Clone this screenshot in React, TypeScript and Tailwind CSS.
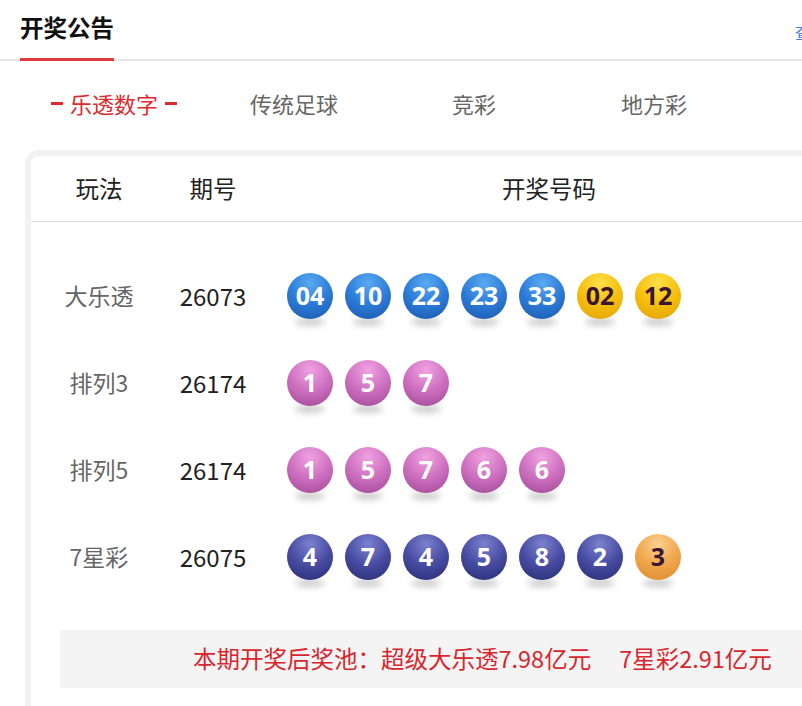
import React from 'react'

type Ball = { n: string; kind: 'blue' | 'yellow' | 'pink' | 'navy' | 'orange' }

const ballStyles: Record<Ball['kind'], string> = {
  blue: 'bg-[radial-gradient(circle_at_50%_22%,#5aaaf2_0%,#2c7bd8_50%,#1b58ab_100%)] text-white',
  yellow: 'bg-[radial-gradient(circle_at_50%_22%,#ffe04a_0%,#f5bf0c_50%,#e0a006_100%)] text-[#3a1630]',
  pink: 'bg-[radial-gradient(circle_at_50%_22%,#f0a2e2_0%,#cd6fbf_50%,#9d4793_100%)] text-white',
  navy: 'bg-[radial-gradient(circle_at_50%_22%,#7b80cf_0%,#474ca2_50%,#262a6f_100%)] text-white',
  orange: 'bg-[radial-gradient(circle_at_50%_22%,#fbd08e_0%,#f0a64c_50%,#db8a2a_100%)] text-[#3a1630]',
}

const rows: { name: string; issue: string; balls: Ball[] }[] = [
  {
    name: '大乐透',
    issue: '26073',
    balls: [
      { n: '04', kind: 'blue' },
      { n: '10', kind: 'blue' },
      { n: '22', kind: 'blue' },
      { n: '23', kind: 'blue' },
      { n: '33', kind: 'blue' },
      { n: '02', kind: 'yellow' },
      { n: '12', kind: 'yellow' },
    ],
  },
  {
    name: '排列3',
    issue: '26174',
    balls: ['1', '5', '7'].map((n) => ({ n, kind: 'pink' as const })),
  },
  {
    name: '排列5',
    issue: '26174',
    balls: ['1', '5', '7', '6', '6'].map((n) => ({ n, kind: 'pink' as const })),
  },
  {
    name: '7星彩',
    issue: '26075',
    balls: [
      ...['4', '7', '4', '5', '8', '2'].map((n) => ({ n, kind: 'navy' as const })),
      { n: '3', kind: 'orange' as const },
    ],
  },
]

const tabs = ['乐透数字', '传统足球', '竞彩', '地方彩']

function LottoBall({ ball }: { ball: Ball }) {
  return (
    <div className="relative w-[46px] h-[46px]">
      {/* soft floor shadow */}
      <div className="absolute left-[8px] right-[8px] -bottom-[7px] h-[8px] rounded-[50%] bg-black/20 blur-[3px]" />
      <div
        className={`relative w-[46px] h-[46px] rounded-full flex items-center justify-center text-[25px] font-bold leading-none ${ballStyles[ball.kind]}`}
        style={{ fontFamily: '"Open Sans", "Liberation Sans", sans-serif' }}
      >
        {ball.n}
      </div>
    </div>
  )
}

export default function App() {
  return (
    <div
      className="w-[802px] h-[706px] overflow-hidden bg-white"
      style={{ fontFamily: '"Noto Sans CJK SC", "Noto Sans", sans-serif' }}
    >
      <div className="w-[960px]">
        {/* Title bar */}
        <div className="relative h-[61px] border-b-2 border-[#e6e6e6] pl-[20px] flex items-start">
          <div className="h-[61px] border-b-[3px] border-[#e0393e] -mb-[2px] pt-[11px]">
            <h1 className="text-[23.5px] font-bold text-[#111] leading-[32px]">开奖公告</h1>
          </div>
          <a className="absolute left-[795px] top-[20px] text-[16px] text-[#3b7fd4]">查看更多</a>
        </div>

        {/* Tabs */}
        <div className="h-[89px] pl-[24px] flex items-center">
          {tabs.map((t, i) => (
            <div key={t} className="w-[180px] flex items-center justify-center pb-[4px]">
              {i === 0 ? (
                <div className="flex items-center gap-[7px] text-[#dc2a2f]">
                  <span className="w-[12px] h-[3px] bg-[#dc2a2f]" />
                  <span className="text-[22px]">{t}</span>
                  <span className="w-[12px] h-[3px] bg-[#dc2a2f]" />
                </div>
              ) : (
                <span className="text-[22px] text-[#666]">{t}</span>
              )}
            </div>
          ))}
        </div>

        {/* Results card */}
        <div className="ml-[25px] border-[6px] border-[#f2f2f2] rounded-[14px] bg-white h-[600px]">
          <div className="h-[66px] flex items-center border-b border-[#dcdcdc] text-[23.5px] text-[#222]">
            <div className="w-[136px] text-center">玩法</div>
            <div className="w-[92px] text-center">期号</div>
            <div className="w-[580px] text-center">开奖号码</div>
          </div>

          <div className="pt-[30px]">
            {rows.map((r) => (
              <div key={r.name} className="h-[87px] flex items-center">
                <div className="w-[136px] text-center text-[23px] text-[#666]">{r.name}</div>
                <div className="w-[92px] text-center text-[24px] text-[#222]">{r.issue}</div>
                <div className="pl-[28px] flex gap-[12px]">
                  {r.balls.map((b, i) => (
                    <LottoBall key={i} ball={b} />
                  ))}
                </div>
              </div>
            ))}
          </div>

          {/* Prize pool */}
          <div className="ml-[29px] mt-[30px] h-[58px] bg-[#f4f4f4] flex items-center pl-[133px] text-[23.5px] text-[#d8262e]">
            <span>本期开奖后奖池：超级大乐透7.98亿元</span>
            <span className="ml-[28px]">7星彩2.91亿元</span>
          </div>
        </div>
      </div>
    </div>
  )
}
